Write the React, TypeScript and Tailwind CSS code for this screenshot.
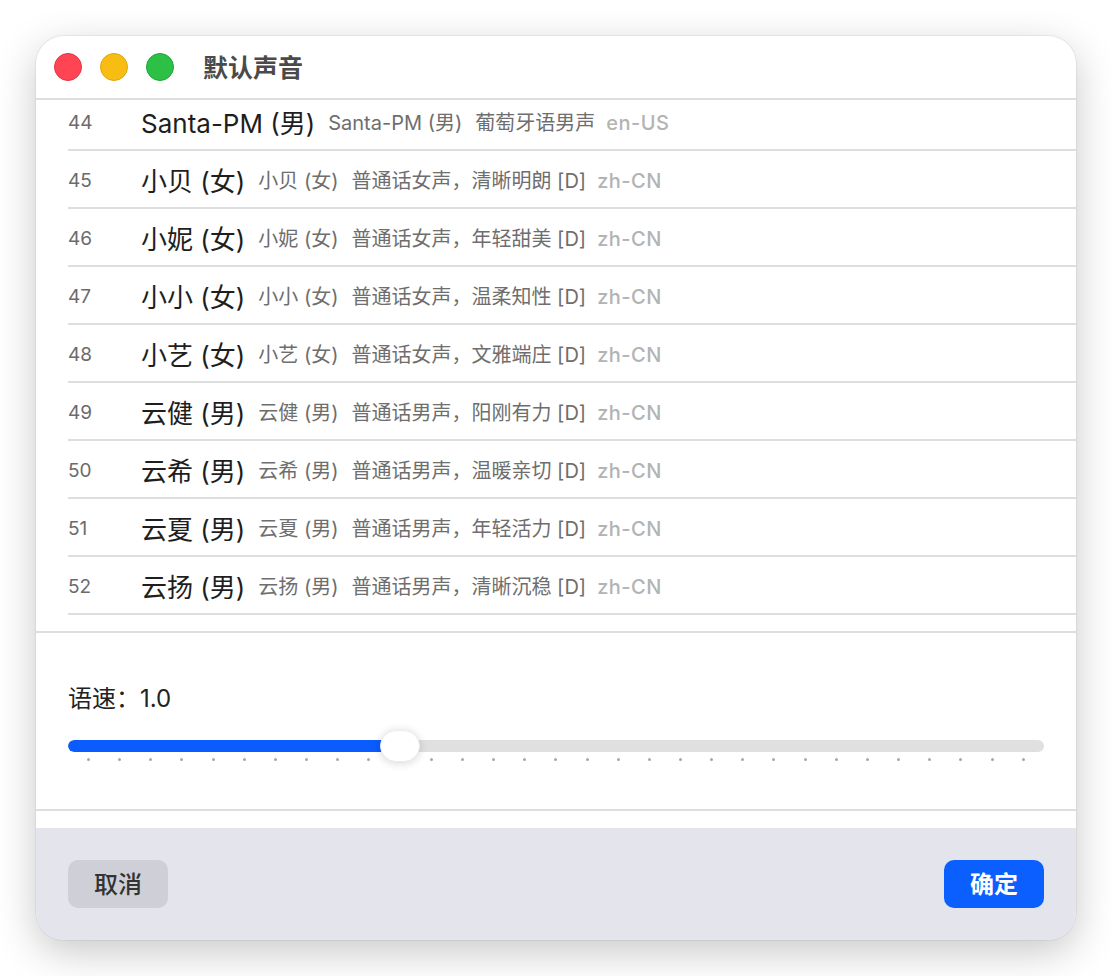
import React from 'react';

const voices = [
  { no: 44, name: 'Santa-PM (男)', desc: '葡萄牙语男声', lang: 'en-US' },
  { no: 45, name: '小贝 (女)', desc: '普通话女声，清晰明朗 [D]', lang: 'zh-CN' },
  { no: 46, name: '小妮 (女)', desc: '普通话女声，年轻甜美 [D]', lang: 'zh-CN' },
  { no: 47, name: '小小 (女)', desc: '普通话女声，温柔知性 [D]', lang: 'zh-CN' },
  { no: 48, name: '小艺 (女)', desc: '普通话女声，文雅端庄 [D]', lang: 'zh-CN' },
  { no: 49, name: '云健 (男)', desc: '普通话男声，阳刚有力 [D]', lang: 'zh-CN' },
  { no: 50, name: '云希 (男)', desc: '普通话男声，温暖亲切 [D]', lang: 'zh-CN' },
  { no: 51, name: '云夏 (男)', desc: '普通话男声，年轻活力 [D]', lang: 'zh-CN' },
  { no: 52, name: '云扬 (男)', desc: '普通话男声，清晰沉稳 [D]', lang: 'zh-CN' },
];

const font = { fontFamily: 'Inter, "Noto Sans CJK SC", sans-serif' };

function Slider() {
  const dots = Array.from({ length: 31 }, (_, i) => i);
  return (
    <div className="relative mt-[25px] w-[976px]">
      <div className="h-[12px] rounded-full bg-[#e0e0e0] overflow-hidden">
        <div className="h-full w-[332px] rounded-full bg-[#0a5cff]" />
      </div>
      <div className="absolute left-[312px] top-[-10px] w-[40px] h-[32px] rounded-full bg-white shadow-[0_1px_8px_rgba(0,0,0,0.16)] border border-[#ececec]" />
      <div className="mt-[6px] mx-[19px] flex justify-between">
        {dots.map(i => (
          <div key={i} className="w-[3px] h-[3px] rounded-full bg-[#a8a8a8]" />
        ))}
      </div>
    </div>
  );
}

export default function App() {
  return (
    <div className="min-h-screen bg-white pt-[36px] pl-[36px]" style={font}>
      <div className="w-[1040px] h-[904px] rounded-[28px] bg-white overflow-hidden flex flex-col shadow-[0_12px_40px_rgba(0,0,0,0.22)] ring-1 ring-black/5">
        {/* title bar */}
        <div className="h-[64px] shrink-0 border-b-2 border-[#dedede] flex items-center pl-[18px]">
          <div className="flex items-center gap-[18px]">
            <span className="w-[28px] h-[28px] rounded-full bg-[#ff4553] border border-[#e2343f]" />
            <span className="w-[28px] h-[28px] rounded-full bg-[#f8bd12] border border-[#dea40d]" />
            <span className="w-[28px] h-[28px] rounded-full bg-[#2dc046] border border-[#20a438]" />
          </div>
          <span className="ml-[29px] pt-[4px] text-[25px] font-bold text-[#4a4a4a]">默认声音</span>
        </div>

        {/* list */}
        <div className="h-[533px] shrink-0 border-b-2 border-[#dedede] overflow-hidden">
          <div className="-mt-[7px]">
            {voices.map(v => (
              <div key={v.no} className="ml-[32px] h-[58px] pt-[4px] border-b-2 border-[#dedede] flex items-center whitespace-nowrap">
                <span className="w-[73px] text-[19px] text-[#6b6b6b]">{v.no}</span>
                <span className="text-[26px] text-[#1e1e1e]">{v.name}</span>
                <span className="ml-[13px] text-[20px] text-[#6e6e6e]">{v.name}</span>
                <span className="ml-[13px] text-[20px] text-[#6e6e6e]">{v.desc}</span>
                <span className="ml-[11px] text-[20px] font-medium tracking-[0.5px] text-[#b3b3b3]">{v.lang}</span>
              </div>
            ))}
          </div>
        </div>

        {/* speed */}
        <div className="h-[178px] shrink-0 border-b-2 border-[#dedede] px-[32px] pt-[50px]">
          <div className="h-[32px] flex items-center text-[24px] text-[#222]">
            <span>语速：</span>
            <span>1.0</span>
          </div>
          <Slider />
        </div>

        <div className="h-[17px] shrink-0" />

        {/* footer */}
        <div className="flex-1 bg-[#e4e4ed] px-[32px] flex items-center justify-between">
          <button className="w-[100px] h-[48px] pt-[2px] rounded-[10px] bg-[#cfcfd7] text-[24px] font-medium text-[#333]">取消</button>
          <button className="w-[100px] h-[48px] pt-[2px] rounded-[10px] bg-[#0b5fff] text-[24px] font-bold text-white">确定</button>
        </div>
      </div>
    </div>
  );
}
